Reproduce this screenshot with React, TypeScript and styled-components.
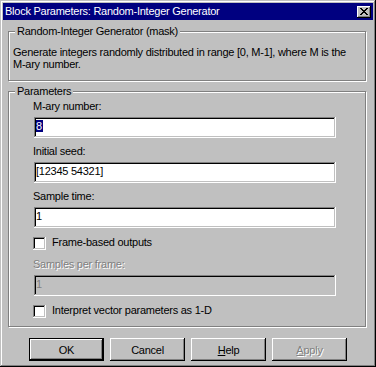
import React from 'react'
import styled, {createGlobalStyle} from 'styled-components'

const GlobalStyle = createGlobalStyle`
  html, body {
    margin: 0;
    padding: 0;
    background: #c0c0c0;
  }
  body {
    font-family: "Liberation Sans", Arial, sans-serif;
    font-size: 11px;
    letter-spacing: -0.25px;
    color: #000;
  }
`

const Window = styled.div`
  box-sizing: border-box;
  width: 376px;
  height: 367px;
  padding: 3px;
  background: #c0c0c0;
  box-shadow: inset -1px -1px #000, inset 1px 1px #c0c0c0,
    inset -2px -2px #808080, inset 2px 2px #fff;
  display: flex;
  flex-direction: column;
`

const TitleBar = styled.div`
  height: 17px;
  background: #000080;
  color: #fff;
  display: flex;
  align-items: center;
  justify-content: space-between;
  padding: 0 2px 0 2px;
`

const TitleText = styled.span`
  line-height: 13px;
  white-space: nowrap;
`

const CloseButton = styled.div`
  box-sizing: border-box;
  width: 14px;
  height: 12px;
  background: #c0c0c0;
  display: flex;
  align-items: center;
  justify-content: center;
  box-shadow: inset -1px -1px #000, inset 1px 1px #fff,
    inset -2px -2px #808080;
  svg {
    display: block;
  }
`

// etched frame with a caption cut into the top edge
const Group = styled.div<{$height: number, $top: number}>`
  position: relative;
  box-sizing: border-box;
  width: 358px;
  height: ${(p) => p.$height}px;
  margin: ${(p) => p.$top}px 0 0 5px;
  border: 1px solid #808080;
  box-shadow: inset 1px 1px #fff, 1px 1px #fff;
`

const Caption = styled.span`
  position: absolute;
  top: -7px;
  left: 6px;
  padding: 0 2px;
  line-height: 13px;
  background: #c0c0c0;
  white-space: nowrap;
`

const Description = styled.p`
  margin: 0;
  padding: 14px 4px 0 4px;
  line-height: 12px;
`

const Params = styled.div`
  display: flex;
  flex-direction: column;
  gap: 7px;
  padding: 8px 0 0 24px;
`

const Field = styled.div`
  display: flex;
  flex-direction: column;
  gap: 4px;
`

const FieldLabel = styled.span<{$disabled?: boolean}>`
  line-height: 13px;
  color: ${(p) => (p.$disabled ? '#808080' : '#000')};
  text-shadow: ${(p) => (p.$disabled ? '1px 1px #fff' : 'none')};
`

const Edit = styled.div<{$disabled?: boolean}>`
  box-sizing: border-box;
  width: 302px;
  height: 21px;
  margin-left: 1px;
  padding: 3px 2px 0 2px;
  line-height: 13px;
  white-space: nowrap;
  background: ${(p) => (p.$disabled ? '#c0c0c0' : '#fff')};
  color: ${(p) => (p.$disabled ? '#808080' : '#000')};
  box-shadow: inset -1px -1px #fff, inset 1px 1px #808080,
    inset -2px -2px #c0c0c0, inset 2px 2px #000;
`

const Selected = styled.span`
  display: inline-block;
  line-height: 12px;
  padding: 0 1px 0 0;
  background: #000080;
  color: #fff;
`

const CheckRow = styled.label`
  display: flex;
  align-items: center;
  gap: 6px;
  height: 13px;
  margin: 2px 0 1px 0;
  line-height: 13px;
`

const CheckBox = styled.span`
  box-sizing: border-box;
  width: 13px;
  height: 13px;
  background: #fff;
  box-shadow: inset -1px -1px #fff, inset 1px 1px #808080,
    inset -2px -2px #c0c0c0, inset 2px 2px #000;
`

const CheckText = styled.span`
  position: relative;
  top: -1px;
`

const ButtonRow = styled.div`
  display: flex;
  justify-content: center;
  gap: 6px;
  margin-top: 11px;
`

const Button = styled.button<{$default?: boolean}>`
  box-sizing: border-box;
  width: 75px;
  height: 23px;
  padding: 0;
  border: none;
  background: #c0c0c0;
  font: inherit;
  letter-spacing: inherit;
  color: ${(p) => (p.disabled ? '#808080' : '#000')};
  text-shadow: ${(p) => (p.disabled ? '1px 1px #fff' : 'none')};
  box-shadow: ${(p) =>
    p.$default
      ? 'inset 0 0 0 1px #000, inset -2px -2px #000, inset 2px 2px #fff, inset -3px -3px #808080'
      : 'inset -1px -1px #000, inset 1px 1px #fff, inset -2px -2px #808080'};
  u {
    text-decoration: underline;
    text-underline-offset: 1px;
  }
`

const CloseGlyph = (): JSX.Element => (
  <svg width='8' height='7' viewBox='0 0 8 7' shapeRendering='crispEdges'>
    <path
      fill='#000'
      d='M0 0h2v1H0zM6 0h2v1H6zM1 1h2v1H1zM5 1h2v1H5zM2 2h4v1H2zM3 3h2v1H3zM2 4h4v1H2zM1 5h2v1H1zM5 5h2v1H5zM0 6h2v1H0zM6 6h2v1H6z'
    />
  </svg>
)

export default function App(): JSX.Element {
  return (
    <>
      <GlobalStyle />
      <Window>
        <TitleBar>
          <TitleText>Block Parameters: Random-Integer Generator</TitleText>
          <CloseButton>
            <CloseGlyph />
          </CloseButton>
        </TitleBar>

        <Group $height={50} $top={11}>
          <Caption>Random-Integer Generator (mask)</Caption>
          <Description>
            Generate integers randomly distributed in range [0, M-1], where M is the M-ary number.
          </Description>
        </Group>

        <Group $height={236} $top={10}>
          <Caption>Parameters</Caption>
          <Params>
            <Field>
              <FieldLabel>M-ary number:</FieldLabel>
              <Edit><Selected>8</Selected></Edit>
            </Field>
            <Field>
              <FieldLabel>Initial seed:</FieldLabel>
              <Edit>[12345 54321]</Edit>
            </Field>
            <Field>
              <FieldLabel>Sample time:</FieldLabel>
              <Edit>1</Edit>
            </Field>
            <CheckRow>
              <CheckBox />
              <CheckText>Frame-based outputs</CheckText>
            </CheckRow>
            <Field>
              <FieldLabel $disabled>Samples per frame:</FieldLabel>
              <Edit $disabled>1</Edit>
            </Field>
            <CheckRow>
              <CheckBox />
              <CheckText>Interpret vector parameters as 1-D</CheckText>
            </CheckRow>
          </Params>
        </Group>

        <ButtonRow>
          <Button $default>OK</Button>
          <Button>Cancel</Button>
          <Button><u>H</u>elp</Button>
          <Button disabled><u>A</u>pply</Button>
        </ButtonRow>
      </Window>
    </>
  )
}
